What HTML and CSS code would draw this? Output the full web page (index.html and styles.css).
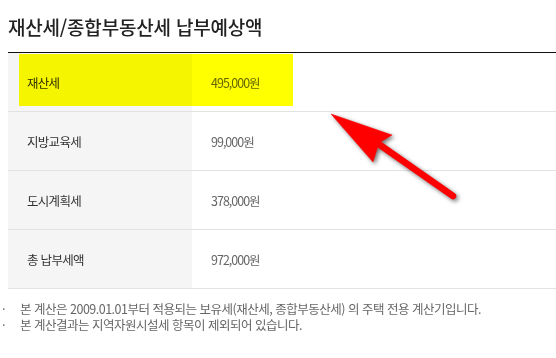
FILE: index.html
```html
<!DOCTYPE html>
<html lang="ko">
<head>
<meta charset="utf-8">
<link rel="stylesheet" href="styles.css">
</head>
<body>
<div class="page">
  <h1 class="title">재산세/종합부동산세 납부예상액</h1>
  <div class="table">
    <div class="row">
      <div class="th">재산세</div>
      <div class="td">495,000원</div>
    </div>
    <div class="row">
      <div class="th">지방교육세</div>
      <div class="td">99,000원</div>
    </div>
    <div class="row">
      <div class="th">도시계획세</div>
      <div class="td">378,000원</div>
    </div>
    <div class="row">
      <div class="th">총 납부세액</div>
      <div class="td">972,000원</div>
    </div>
    <div class="highlight"></div>
  </div>
  <ul class="notes">
    <li>본 계산은 2009.01.01부터 적용되는 보유세(재산세, 종합부동산세) 의 주택 전용 계산기입니다.</li>
    <li>본 계산결과는 지역자원시설세 항목이 제외되어 있습니다.</li>
  </ul>
  <svg class="arrow" width="150" height="100" viewBox="0 0 150 100">
    <g fill="#ff0000" stroke="#ff0000">
      <line x1="60" y1="40" x2="133" y2="91" stroke-width="6.5" stroke-linecap="round"/>
      <polygon points="11,9 72,30 59,38 53,57" stroke-width="0.5" stroke-linejoin="round"/>
    </g>
  </svg>
</div>
</body>
</html>
```
FILE: styles.css
```css
* { box-sizing: border-box; }
html, body { margin: 0; padding: 0; background: #fff; }
body {
  font-family: "Noto Sans CJK KR", "Noto Sans", sans-serif;
  color: #333;
  width: 556px;
  height: 358px;
  overflow: hidden;
}
.page { position: relative; padding-top: 14px; }
.title {
  margin: 0 0 13px 8px;
  font-size: 19px;
  line-height: 25px;
  font-weight: 500;
  color: #222;
  letter-spacing: -0.2px;
}
.table {
  position: relative;
  margin-left: 8px;
  border-top: 1px solid #111;
}
.row {
  display: flex;
  height: 59px;
  border-bottom: 1px solid #e2e2e2;
}
.th {
  width: 184px;
  background: #f5f5f5;
  display: flex;
  align-items: center;
  padding-left: 19px;
  font-size: 12.5px;
  letter-spacing: -0.7px;
  color: #333;
}
.td {
  flex: 1;
  display: flex;
  align-items: center;
  padding-left: 19px;
  font-size: 12.5px;
  letter-spacing: -1px;
  color: #666;
}
.highlight {
  position: absolute;
  left: 11px;
  top: 1px;
  width: 274px;
  height: 52px;
  background: #ffff00;
  mix-blend-mode: multiply;
}
.notes {
  list-style: none;
  margin: 12px 0 0 0;
  padding: 0;
  font-size: 12.5px;
  line-height: 16px;
  color: #666;
  letter-spacing: -0.5px;
}
.notes li {
  display: flex;
  height: 16px;
}
.notes li::before {
  content: "·";
  width: 18px;
  padding-left: 2px;
  flex: none;
}
.arrow {
  position: absolute;
  left: 320px;
  top: 105px;
  filter: drop-shadow(2px 2px 2px rgba(0,0,0,0.55));
}
```
